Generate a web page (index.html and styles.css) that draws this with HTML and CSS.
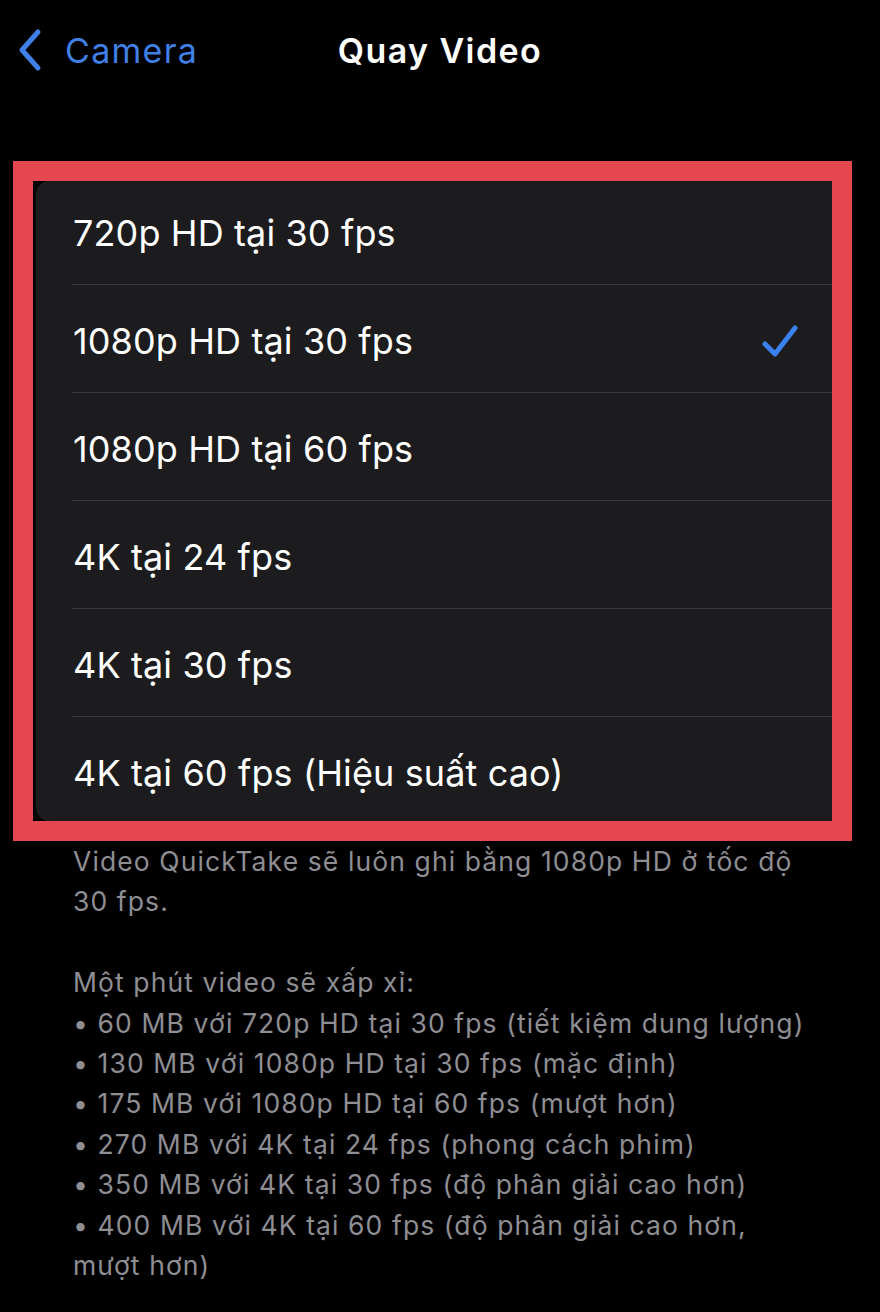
FILE: index.html
```html
<!DOCTYPE html>
<html lang="vi">
<head>
<meta charset="utf-8">
<title>Quay Video</title>
<link rel="stylesheet" href="styles.css">
</head>
<body>
<header class="nav">
  <a class="back" href="#">
    <svg class="chev" width="26" height="44" viewBox="0 0 26 44"><path d="M21 4 L5 22 L21 40" fill="none" stroke="#3f7fe6" stroke-width="5" stroke-linecap="round" stroke-linejoin="round"/></svg>
    <span>Camera</span>
  </a>
  <h1 class="title">Quay Video</h1>
  <div></div>
</header>
<main>
  <div class="frame">
    <div class="card">
      <ul class="list">
        <li class="row"><span>720p HD tại 30 fps</span></li>
        <li class="row"><span>1080p HD tại 30 fps</span>
          <svg class="check" width="36" height="34" viewBox="0 0 36 34"><path d="M3 20 L13 30 L33 4" fill="none" stroke="#3a80ee" stroke-width="5" stroke-linecap="round" stroke-linejoin="round"/></svg>
        </li>
        <li class="row"><span>1080p HD tại 60 fps</span></li>
        <li class="row"><span>4K tại 24 fps</span></li>
        <li class="row"><span>4K tại 30 fps</span></li>
        <li class="row"><span>4K tại 60 fps (Hiệu suất cao)</span></li>
      </ul>
    </div>
  </div>
  <div class="footer">
    <p>Video QuickTake sẽ luôn ghi bằng 1080p HD ở tốc độ 30 fps.</p>
    <p>Một phút video sẽ xấp xỉ:<br>
    • 60 MB với 720p HD tại 30 fps (tiết kiệm dung lượng)<br>
    • 130 MB với 1080p HD tại 30 fps (mặc định)<br>
    • 175 MB với 1080p HD tại 60 fps (mượt hơn)<br>
    • 270 MB với 4K tại 24 fps (phong cách phim)<br>
    • 350 MB với 4K tại 30 fps (độ phân giải cao hơn)<br>
    • 400 MB với 4K tại 60 fps (độ phân giải cao hơn, mượt hơn)</p>
  </div>
</main>
</body>
</html>
```
FILE: styles.css
```css
* { box-sizing: border-box; }
html, body {
  margin: 0;
  padding: 0;
  background: #000;
}
body {
  width: 880px;
  height: 1312px;
  overflow: hidden;
  font-family: Inter, "Noto Sans", sans-serif;
  color: #fff;
}
.nav {
  display: grid;
  grid-template-columns: 1fr auto 1fr;
  align-items: center;
  height: 100px;
  padding: 0 18px;
}
.back {
  display: flex;
  align-items: center;
  gap: 22px;
  color: #3f7fe6;
  text-decoration: none;
  font-size: 34px;
  letter-spacing: 1.3px;
}
.chev { display: block; margin-left: -1px; }
.title {
  margin: 0;
  font-size: 34px;
  font-weight: 600;
  letter-spacing: 1.4px;
}
main { padding-top: 61px; }
.frame {
  margin-left: 13px;
  width: 839px;
  height: 680px;
  border: 20px solid #e5474e;
  background: #000;
  padding-left: 3px;
  overflow: hidden;
}
.card {
  height: 100%;
  background: #1c1c1e;
  border-radius: 13px 0 0 13px;
  overflow: hidden;
}
.list {
  list-style: none;
  margin: -4px 0 0 0;
  padding: 0 0 0 36px;
}
.row {
  display: flex;
  align-items: center;
  justify-content: space-between;
  height: 108px;
  padding: 4px 34px 0 1px;
  border-bottom: 1px solid #39393c;
  font-size: 36px;
  letter-spacing: 0.12px;
}
.row:last-child { border-bottom: none; }
.check { display: block; }
.footer {
  padding: 0 70px 0 73px;
  color: #8e8e93;
  font-size: 26.5px;
  line-height: 40.4px;
  letter-spacing: 1.1px;
}
.footer p { margin: 0 0 40.4px 0; }
```
